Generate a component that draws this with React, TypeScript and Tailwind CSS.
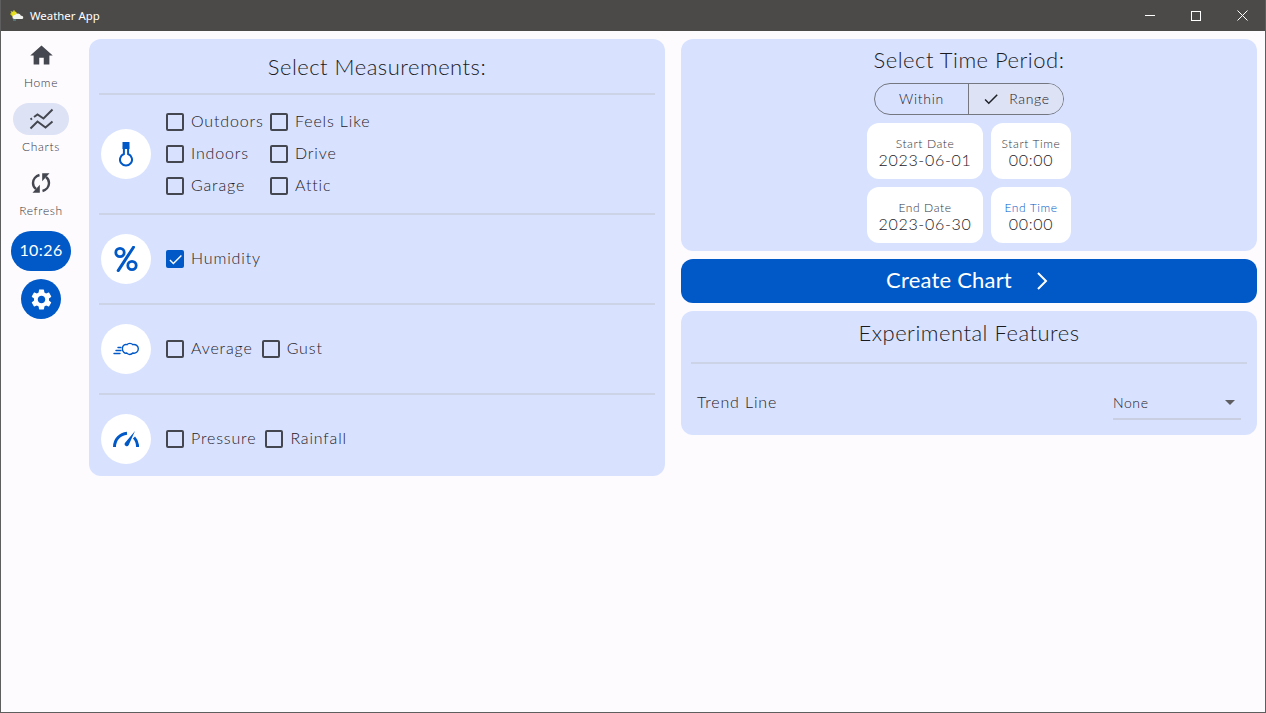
import React from "react";
import { MdHome, MdSettings, MdCheck } from "react-icons/md";

const Box = ({ checked = false }: { checked?: boolean }) =>
  checked ? (
    <span className="flex h-[18px] w-[18px] shrink-0 items-center justify-center rounded-[2px] bg-[#0059c7] text-white">
      <MdCheck size={17} />
    </span>
  ) : (
    <span className="h-[18px] w-[18px] shrink-0 rounded-[2px] border-2 border-[#44474f]" />
  );

const Check = ({ label, checked }: { label: string; checked?: boolean }) => (
  <div className="flex h-8 items-center gap-[7px]">
    <Box checked={checked} />
    <span className="-mt-[2px] text-[16px] font-light leading-none tracking-[0.85px] text-[#1f2128]">{label}</span>
  </div>
);

const Circle = ({ children }: { children: React.ReactNode }) => (
  <div className="flex h-[50px] w-[50px] shrink-0 items-center justify-center rounded-full bg-white text-[#0059c7]">
    {children}
  </div>
);

const Thermo = () => (
  <svg width="14" height="25" viewBox="0 0 14 25" fill="none">
    <path d="M3.500 0h7v7h-7z" fill="#0059c7" />
    <path d="M4.900 4v8a6 6 0 1 0 4.200 0V4" stroke="#0059c7" strokeWidth="2" />
  </svg>
);

const Percent = () => (
  <svg width="24" height="26" viewBox="0 0 24 26" fill="none" stroke="#0059c7">
    <circle cx="6" cy="6.500" r="4.200" strokeWidth="2.800" />
    <circle cx="18" cy="19.500" r="4.200" strokeWidth="2.800" />
    <path d="M19.500 1.200 4.200 24.600" strokeWidth="3" strokeLinecap="round" />
  </svg>
);

const ChartIcon = () => (
  <svg width="27" height="27" viewBox="0 0 27 27" fill="none" stroke="#44474f" strokeWidth="2">
    <path d="M2.500 13.500 4 12.400M6 11l3.500-2.500 6 4 9-9" />
    <path d="M2.500 22.500l7-7 8 6 7-6" />
  </svg>
);

const Refresh = () => (
  <svg width="22" height="22" viewBox="0 0 22 22" fill="none">
    <g>
      <path d="M9.500 3C5.700 4 3 7.200 3 11c0 2.400 1 4.500 3 6" stroke="#44474f" strokeWidth="2.400" />
      <path d="M9.800 12.800v8H2.500Z" fill="#44474f" />
    </g>
    <g transform="rotate(180 11 11)">
      <path d="M9.500 3C5.700 4 3 7.200 3 11c0 2.400 1 4.500 3 6" stroke="#44474f" strokeWidth="2.400" />
      <path d="M9.800 12.800v8H2.500Z" fill="#44474f" />
    </g>
  </svg>
);

const Wind = () => (
  <svg width="26" height="14" viewBox="0 0 26 14" fill="none" stroke="#0059c7">
    <path
      d="M10 4.200C11 2.600 12.600 2.200 14 2.600 15.200.9 18.600.9 19.800 2.600 22.800 2 25.300 4 25.300 6.800S22.800 11.800 19.800 11C18.400 12.900 15 12.900 13.800 11 11.600 11.800 9.400 9.400 9.400 7 9.400 5.900 9.600 4.900 10 4.200Z"
      strokeWidth="1.400"
    />
    <path d="M5 5.500h3M3 8.500h5M1 11.500h6" strokeWidth="1.400" strokeLinecap="round" />
  </svg>
);

const Gauge = () => (
  <svg width="26" height="16" viewBox="0 0 26 16" fill="none">
    <path d="M1.500 16C1.500 8.500 7 2.800 14 2.200" stroke="#0059c7" strokeWidth="3" />
    <path d="M21 6.500c2.400 2.400 3.600 5.700 3.600 9.500" stroke="#0059c7" strokeWidth="3" />
    <path d="M22 0 15.700 14a2.200 2.200 0 0 1-4-1.800Z" fill="#0059c7" />
  </svg>
);

const Logo = () => (
  <svg width="14" height="12" viewBox="0 0 14 12">
    <circle cx="4" cy="4" r="2.800" fill="#e6e020" />
    <path d="M1 1 2 3M4 0v2M0 4h2" stroke="#e6e020" strokeWidth="0.800" />
    <path d="M4 9a2 2 0 0 1 1-4 3.400 3.400 0 0 1 6 .8A1.800 1.800 0 0 1 12.500 9Z" fill="#f2f2ee" />
    <path d="M3 10h3" stroke="#5aa0a0" strokeWidth="1" />
  </svg>
);

const Divider = () => <div className="h-[2px] bg-[#cdd3e6]" />;

const Row = ({ h, icon, children }: { h: string; icon: React.ReactNode; children: React.ReactNode }) => (
  <div className={`flex items-center gap-[15px] px-[2px] ${h}`}>
    <Circle>{icon}</Circle>
    {children}
  </div>
);

const DateCard = ({ label, value, w, blue }: { label: string; value: string; w: string; blue?: boolean }) => (
  <div className={`flex h-14 flex-col items-center justify-center rounded-xl bg-white pt-[3px] ${w}`}>
    <span className={`text-[12px] font-light leading-[14px] tracking-[0.6px] ${blue ? "text-[#0059c7]" : "text-[#33353c]"}`}>{label}</span>
    <span className="text-[16px] font-light leading-[18px] tracking-[0.7px] text-[#1b1b1f]">{value}</span>
  </div>
);

const Nav = ({ label, active, children }: { label: string; active?: boolean; children: React.ReactNode }) => (
  <div className="flex h-16 flex-col items-center text-[#44474f]">
    <div className={`flex h-8 w-14 items-center justify-center rounded-2xl ${active ? "bg-[#dde2f5]" : ""}`}>{children}</div>
    <span className="mt-[2px] text-[12px] font-light leading-[20px] tracking-[0.65px] text-[#33353c]">{label}</span>
  </div>
);

const Title = ({ h, children }: { h: string; children: React.ReactNode }) => (
  <div className={`flex items-center justify-center text-[22px] font-light leading-none tracking-[0.5px] text-[#1b1b1f] ${h}`}>{children}</div>
);

export default function App() {
  return (
    <div
      className="flex h-screen w-full flex-col overflow-hidden border border-t-0 border-[#5e5e5e] bg-[#fefbff]"
      style={{ fontFamily: '"Lato", "Open Sans", sans-serif' }}
    >
      <div className="-mx-px flex h-[31px] shrink-0 items-center bg-[#4c4a48] text-white">
        <div className="ml-[10px] flex w-[20px] items-center"><Logo /></div>
        <span className="text-[11.400px] leading-none" style={{ fontFamily: '"Noto Sans", sans-serif' }}>Weather App</span>
        <div className="ml-auto flex h-full items-center pr-px">
          <div className="flex h-full w-[46px] items-center justify-center">
            <span className="h-px w-[10px] bg-white" />
          </div>
          <div className="flex h-full w-[46px] items-center justify-center">
            <span className="h-[10px] w-[10px] border border-white" />
          </div>
          <div className="flex h-full w-[46px] items-center justify-center">
            <svg width="11" height="11" viewBox="0 0 11 11" stroke="white" strokeWidth="1"><path d="M.5.5l10 10M10.500.5l-10 10" /></svg>
          </div>
        </div>
      </div>

      <div className="flex min-h-0 flex-1">
        <div className="flex w-[80px] shrink-0 flex-col items-center pt-2">
          <Nav label="Home"><MdHome size={27} /></Nav>
          <Nav label="Charts" active><ChartIcon /></Nav>
          <Nav label="Refresh"><Refresh /></Nav>
          <div className="flex h-10 w-[60px] items-center justify-center rounded-[20px] bg-[#0059c7] pb-[2px] text-[16px] tracking-[0.4px] text-white">10:26</div>
          <div className="mt-2 flex h-10 w-10 items-center justify-center rounded-full bg-[#0059c7] text-white"><MdSettings size={25} /></div>
        </div>

        <div className="grid min-w-0 flex-1 grid-cols-2 items-start gap-4 px-2 pt-2">
          <div className="h-[437px] rounded-xl bg-[#d8e2ff] px-[10px]">
            <Title h="h-[54px] pt-[2px]">Select Measurements:</Title>
            <Divider />
            <Row h="h-[118px]" icon={<Thermo />}>
              <div className="grid grid-cols-[104px_auto]">
                <Check label="Outdoors" /><Check label="Feels Like" />
                <Check label="Indoors" /><Check label="Drive" />
                <Check label="Garage" /><Check label="Attic" />
              </div>
            </Row>
            <Divider />
            <Row h="h-[88px]" icon={<Percent />}>
              <Check label="Humidity" checked />
            </Row>
            <Divider />
            <Row h="h-[88px]" icon={<Wind />}>
              <div className="flex gap-[9px]"><Check label="Average" /><Check label="Gust" /></div>
            </Row>
            <Divider />
            <Row h="h-[88px]" icon={<Gauge />}>
              <div className="flex gap-[9px]"><Check label="Pressure" /><Check label="Rainfall" /></div>
            </Row>
          </div>

          <div className="flex flex-col gap-2">
            <div className="flex h-[212px] flex-col items-center rounded-xl bg-[#d8e2ff]">
              <Title h="h-[42px] mb-[2px]">Select Time Period:</Title>
              <div className="flex h-8 w-[190px] overflow-hidden rounded-2xl border border-[#74777f] text-[14px] font-light tracking-[0.7px] text-[#1f2128]">
                <div className="flex flex-1 items-center justify-center pb-[2px]">Within</div>
                <div className="flex w-[95px] items-center justify-center gap-[9px] border-l border-[#74777f] bg-[#dde2f5] pb-[2px]">
                  <MdCheck size={18} className="mt-[2px]" /><span>Range</span>
                </div>
              </div>
              <div className="mt-2 flex flex-col gap-2">
                <div className="flex gap-2">
                  <DateCard label="Start Date" value="2023-06-01" w="w-[116px]" />
                  <DateCard label="Start Time" value="00:00" w="w-20" />
                </div>
                <div className="flex gap-2">
                  <DateCard label="End Date" value="2023-06-30" w="w-[116px]" />
                  <DateCard label="End Time" value="00:00" w="w-20" blue />
                </div>
              </div>
            </div>

            <div className="flex h-[44px] items-center justify-center gap-6 rounded-xl bg-[#0059c7] pr-[4px] text-white">
              <span className="pb-[2px] text-[22px] leading-none tracking-[0.2px]">Create Chart</span>
              <svg width="12" height="18" viewBox="0 0 12 18" fill="none" stroke="white" strokeWidth="2"><path d="M2 1l8 8-8 8" /></svg>
            </div>

            <div className="h-[124px] rounded-xl bg-[#d8e2ff] px-[10px]">
              <Title h="h-[44px] mb-[7px]">Experimental Features</Title>
              <Divider />
              <div className="flex h-[71px] items-center justify-between px-[6px] pt-[4px]">
                <span className="mt-[1px] text-[16px] font-light leading-none tracking-[0.85px] text-[#1f2128]">Trend Line</span>
                <div className="mt-[4px] flex h-[32px] w-[128px] items-center justify-between border-b-2 border-[#c9cfe0] pr-[6px]">
                  <span className="text-[14px] font-light tracking-[0.6px] text-[#1f2128]">None</span>
                  <span className="h-0 w-0 border-x-[5px] border-t-[5px] border-x-transparent border-t-[#5e5e62]" />
                </div>
              </div>
            </div>
          </div>
        </div>
      </div>
    </div>
  );
}
